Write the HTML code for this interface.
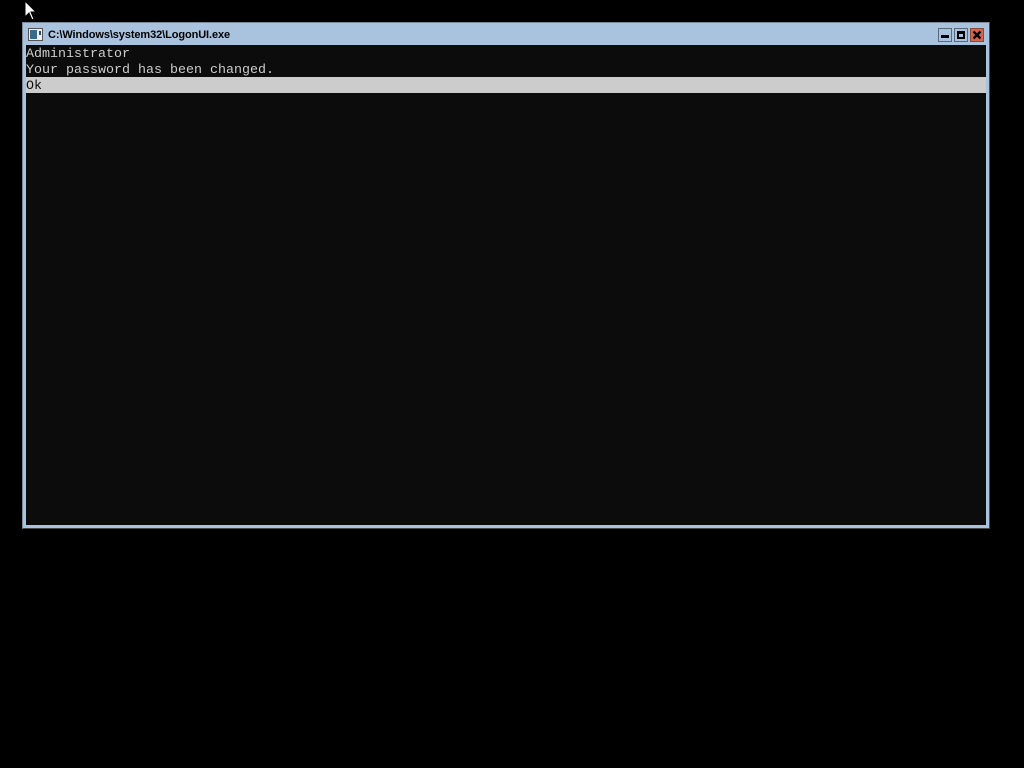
<!DOCTYPE html>
<html><head><style>
body{margin:0;width:1024px;height:768px;background:#000;position:relative;overflow:hidden}
.win{position:absolute;left:22px;top:22px;width:966px;height:505px;background:#a9c3df;border:1px solid #4a4a4a;border-top-color:#7a8a9a;border-left-color:#7a8a9a}
.title{position:absolute;left:25px;top:29px;font:bold 11px "Liberation Sans",sans-serif;color:#000;letter-spacing:-0.1px}
.content{position:absolute;left:26px;top:45px;width:960px;height:480px;background:#0c0c0c;font:13.33px/16px "Liberation Mono",monospace;color:#cccccc}
.content div{height:16px;white-space:pre;position:relative}
.content span{position:relative;top:2px}
.sel{background:#cccccc;color:#0c0c0c}
.btn{position:absolute;top:28px;width:12px;height:12px;border:1px solid #5a6a7a;background:#a9c3df}
</style></head><body>
<svg style="position:absolute;left:24px;top:0" width="14" height="22"><path d="M1 1 L1 17 L5 13 L8 20 L10 19 L7 12 L12 12 Z" fill="#fff" stroke="#000" stroke-width="1"/></svg>
<div class="win"></div>
<svg style="position:absolute;left:28px;top:28px" width="15" height="13"><rect x="0.5" y="0.5" width="14" height="12" fill="#eee" stroke="#555"/><rect x="2" y="2" width="7" height="9" fill="#3a6a8a"/><rect x="11" y="3" width="2" height="4" fill="#2a4a6a"/></svg>
<div class="title" style="left:48px">C:\Windows\system32\LogonUI.exe</div>
<div class="btn" style="left:938px"><div style="position:absolute;left:2px;top:6px;width:8px;height:3px;background:#000"></div></div>
<div class="btn" style="left:954px"><div style="position:absolute;left:2px;top:2px;width:4px;height:3px;border:2px solid #000;border-top-width:3px"></div></div>
<div class="btn" style="left:970px;background:#d9634a;border-color:#8a4a3a"><svg width="12" height="12" style="position:absolute;left:0;top:0"><path d="M2.5 2.5 L9.5 9.5 M9.5 2.5 L2.5 9.5" stroke="#000" stroke-width="2.4"/></svg></div>
<div class="content">
<div><span>Administrator</span></div>
<div><span>Your password has been changed.</span></div>
<div class="sel"><span>Ok</span></div>
</div>
</body></html>
